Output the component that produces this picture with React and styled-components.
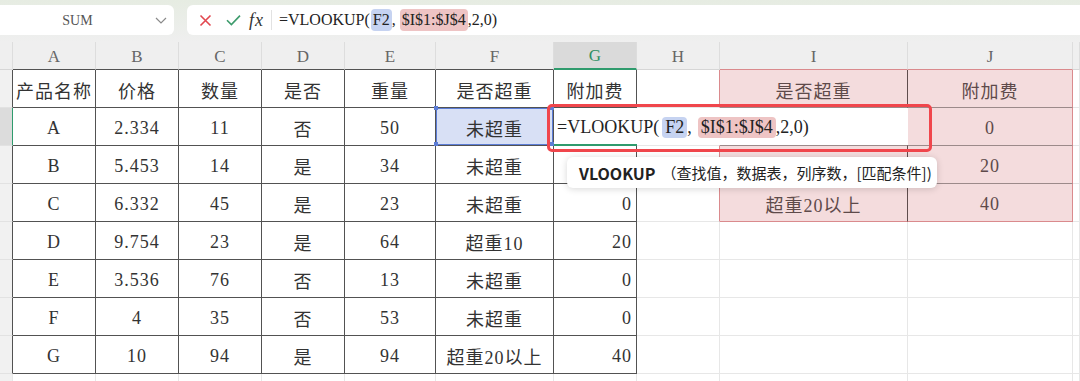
import React from "react"
import styled, { createGlobalStyle } from "styled-components"

const DARK = "#525252"
const LIGHT = "#e7e7e7"
const PINK_EDGE = "#da8a8d"
const PINK_IN_H = "#9c8a8a"
const PINK_IN_V = "#5f4d4d"
const PINK_BG = "#f4dcdd"
const GREEN = "#2f9b6d"
const BLUE = "#5c7dd6"

const COLS = [13, 83, 83, 83, 83, 91, 118, 83, 83, 188, 165]

const GlobalStyle = createGlobalStyle`
  html, body {
    margin: 0;
    padding: 0;
    background: #fff;
    overflow: hidden;
  }
  body {
    font-family: "Liberation Serif", "Noto Sans CJK SC", serif;
  }
`

const Page = styled.div`
  width: 1080px;
  height: 381px;
  overflow: hidden;
  background: #fff;
`

const Toolbar = styled.div`
  height: 42px;
  box-sizing: border-box;
  padding-top: 5px;
  display: flex;
  align-items: flex-start;
  gap: 13px;
  background: linear-gradient(#e6ece2, #efefef);
`

const NameBox = styled.div`
  width: 174px;
  height: 30px;
  background: #fff;
  border-radius: 0 6px 6px 0;
  display: flex;
  align-items: center;
  padding-right: 7px;
  box-sizing: border-box;
`

const NameText = styled.span`
  flex: 1;
  text-align: center;
  font-family: "Liberation Serif", serif;
  font-size: 14px;
  color: #555;
  padding-top: 1px;
`

const FormulaBox = styled.div`
  flex: 1;
  height: 30px;
  background: #fff;
  border-radius: 6px 0 0 6px;
  display: flex;
  align-items: center;
  padding-left: 12px;
`

const IconSlot = styled.span`
  display: inline-flex;
  align-items: center;
  margin-right: ${(p) => p.$gap || 14}px;
`

const Fx = styled.span`
  font-style: italic;
  font-size: 18px;
  color: #333;
  letter-spacing: 1px;
  margin-right: 7px;
`

const Divider = styled.span`
  width: 1px;
  height: 20px;
  background: #e2e2e2;
  margin-right: 7px;
`

const FormulaText = styled.span`
  display: inline-flex;
  align-items: center;
  font-size: ${(p) => p.$size || 16}px;
  color: #222;
  white-space: nowrap;
`

const Ref = styled.span`
  display: inline-block;
  padding: ${(p) => (p.$tall ? "2px 2px" : "0 3px")};
  margin-left: ${(p) => p.$ml || 0}px;
  border-radius: 4px;
  background: ${(p) => (p.$kind === "blue" ? "#c6d3f1" : "#eec4c4")};
`

const Sheet = styled.div`
  display: grid;
  grid-template-columns: ${COLS.map((w) => w + "px").join(" ")} 1fr;
  grid-template-rows: 28px;
  grid-auto-rows: 38px;
`

const ColHead = styled.div`
  box-sizing: border-box;
  display: flex;
  align-items: center;
  justify-content: center;
  padding-top: 2px;
  font-size: 17px;
  background: ${(p) => (p.$active ? "#dadada" : "#efefef")};
  color: ${(p) => (p.$active ? "#2f8f63" : "#666")};
  border-right: 1px solid #dddddd;
  border-bottom: ${(p) =>
    p.$active ? `2px solid ${GREEN}` : `1px solid ${p.$bb || "#d6d6d6"}`};
`

const RowHead = styled.div`
  box-sizing: border-box;
  background: ${(p) => (p.$active ? "#dcdcdc" : "#f1f1f1")};
  border-right: 1px solid ${(p) => p.$br};
  border-bottom: 1px solid #e2e2e2;
`

const Cell = styled.div`
  box-sizing: border-box;
  position: relative;
  display: flex;
  align-items: center;
  justify-content: ${(p) => (p.$right ? "flex-end" : "center")};
  padding: 3px ${(p) => (p.$right ? "4px" : "0")} 0 0;
  font-size: 18px;
  letter-spacing: 1px;
  white-space: nowrap;
  color: ${(p) => p.$color || "#333"};
  background: ${(p) => p.$bg || "#fff"};
  border-right: 1px solid ${(p) => p.$br};
  border-bottom: 1px solid ${(p) => p.$bb};
  box-shadow: ${(p) => (p.$selected ? `inset 0 0 0 1px ${BLUE}` : "none")};
`

const Handle = styled.span`
  position: absolute;
  width: 4px;
  height: 4px;
  background: ${BLUE};
  ${(p) => (p.$top ? "top: -2px;" : "bottom: -1px;")}
  ${(p) => (p.$left ? "left: -2px;" : "right: -1px;")}
`

const Editor = styled.div`
  position: absolute;
  left: 0;
  top: 0;
  width: 354px;
  height: 37px;
  z-index: 2;
  background: #fff;
  display: flex;
  align-items: center;
  padding: 2px 0 0 3px;
  box-sizing: border-box;
  letter-spacing: 0;

  &::after {
    content: "";
    position: absolute;
    left: 0;
    bottom: -1px;
    width: 83px;
    height: 2px;
    background: ${GREEN};
  }
`

const RedFrame = styled.div`
  position: absolute;
  left: -7px;
  top: -4px;
  width: 385px;
  height: 48px;
  box-sizing: border-box;
  border: 3px solid #f0464c;
  border-radius: 5px;
  z-index: 3;
  pointer-events: none;
`

const Tooltip = styled.div`
  position: absolute;
  left: 13px;
  top: 49px;
  width: 370px;
  height: 31px;
  z-index: 4;
  box-sizing: border-box;
  padding-left: 12px;
  display: flex;
  align-items: center;
  background: #fff;
  border-radius: 6px;
  box-shadow: 0 1px 7px rgba(0, 0, 0, 0.16);
  font-family: "Noto Sans CJK SC", sans-serif;
  font-size: 15px;
  letter-spacing: 0;
  color: #222;
`

const FnName = styled.b`
  font-size: 16px;
  margin-right: 6px;
`

const LETTERS = ["A", "B", "C", "D", "E", "F", "G", "H", "I", "J", ""]

// G3 and I3 sit under the function tooltip, so they stay empty here
const rows = [
  ["产品名称", "价格", "数量", "是否", "重量", "是否超重", "附加费", "", "是否超重", "附加费"],
  ["A", "2.334", "11", "否", "50", "未超重", "", "", "", "0"],
  ["B", "5.453", "14", "是", "34", "未超重", "", "", "", "20"],
  ["C", "6.332", "45", "是", "23", "未超重", "0", "", "超重20以上", "40"],
  ["D", "9.754", "23", "是", "64", "超重10", "20", "", "", ""],
  ["E", "3.536", "76", "否", "13", "未超重", "0", "", "", ""],
  ["F", "4", "35", "否", "53", "未超重", "0", "", "", ""],
  ["G", "10", "94", "是", "94", "超重20以上", "40", "", "", ""],
  ["", "", "", "", "", "", "", "", "", ""],
]

function cellStyle(r, c) {
  const main = c >= 1 && c <= 7 && r <= 8
  const pink = (c === 9 || c === 10) && r <= 4
  let br = LIGHT
  let bb = LIGHT
  if (main) {
    br = DARK
    bb = DARK
  } else if (c === 8 && r <= 4) {
    br = PINK_EDGE
  } else if (pink) {
    br = c === 9 ? PINK_IN_V : PINK_EDGE
  }
  if (pink) bb = r === 4 ? PINK_EDGE : PINK_IN_H
  return {
    $br: br,
    $bb: bb,
    $bg: pink ? PINK_BG : undefined,
    $color: pink ? "#5e4a4a" : undefined,
    $right: c === 7 && r >= 2,
  }
}

function FormulaBar() {
  return (
    <Toolbar>
      <NameBox>
        <NameText>SUM</NameText>
        <svg width="12" height="7" viewBox="0 0 12 7">
          <path d="M1 1l5 5 5-5" stroke="#8a8a8a" strokeWidth="1.2" fill="none" />
        </svg>
      </NameBox>
      <FormulaBox>
        <IconSlot $gap={14}>
          <svg width="13" height="13" viewBox="0 0 13 13">
            <path d="M1.5 1.5l10 10M11.5 1.5l-10 10" stroke="#e2474f" strokeWidth="1.6" />
          </svg>
        </IconSlot>
        <IconSlot $gap={8}>
          <svg width="15" height="12" viewBox="0 0 15 12">
            <path d="M1 6.2l4.4 4.4L14 1.6" stroke="#3d9b6c" strokeWidth="1.6" fill="none" />
          </svg>
        </IconSlot>
        <Fx>fx</Fx>
        <Divider />
        <FormulaText>
          =VLOOKUP(
          <Ref $kind="blue" $tall $ml={1}>F2</Ref>,
          <Ref $kind="pink" $tall $ml={4}>$I$1:$J$4</Ref>,2,0)
        </FormulaText>
      </FormulaBox>
    </Toolbar>
  )
}

function EditingCell() {
  return (
    <>
      <Editor>
        <FormulaText $size={18}>
          =VLOOKUP(
          <Ref $kind="blue" $ml={3}>F2</Ref>,
          <Ref $kind="pink" $ml={6}>$I$1:$J$4</Ref>,2,0)
        </FormulaText>
      </Editor>
      <RedFrame />
      <Tooltip>
        <FnName>VLOOKUP</FnName>
        （查找值，数据表，列序数，[匹配条件])
      </Tooltip>
    </>
  )
}

export default function App() {
  return (
    <Page>
      <GlobalStyle />
      <FormulaBar />
      <Sheet>
        <ColHead />
        {LETTERS.map((l, i) => (
          <ColHead
            key={i}
            $active={l === "G"}
            $bb={i <= 6 ? DARK : i === 8 || i === 9 ? PINK_EDGE : undefined}
          >
            {l}
          </ColHead>
        ))}
        {rows.map((row, ri) => {
          const r = ri + 1
          return (
            <React.Fragment key={r}>
              <RowHead $active={r === 2} $br={r === 2 ? GREEN : r <= 8 ? DARK : LIGHT} />
              {[...row, ""].map((v, ci) => {
                const c = ci + 1
                if (r === 2 && c === 7) {
                  return (
                    <Cell key={c} {...cellStyle(r, c)}>
                      <EditingCell />
                    </Cell>
                  )
                }
                if (r === 2 && c === 6) {
                  return (
                    <Cell key={c} {...cellStyle(r, c)} $bg="#d8e0f5" $selected>
                      {v}
                      <Handle $top $left />
                      <Handle $top />
                      <Handle $left />
                      <Handle />
                    </Cell>
                  )
                }
                return (
                  <Cell key={c} {...cellStyle(r, c)}>
                    {v}
                  </Cell>
                )
              })}
            </React.Fragment>
          )
        })}
      </Sheet>
    </Page>
  )
}
